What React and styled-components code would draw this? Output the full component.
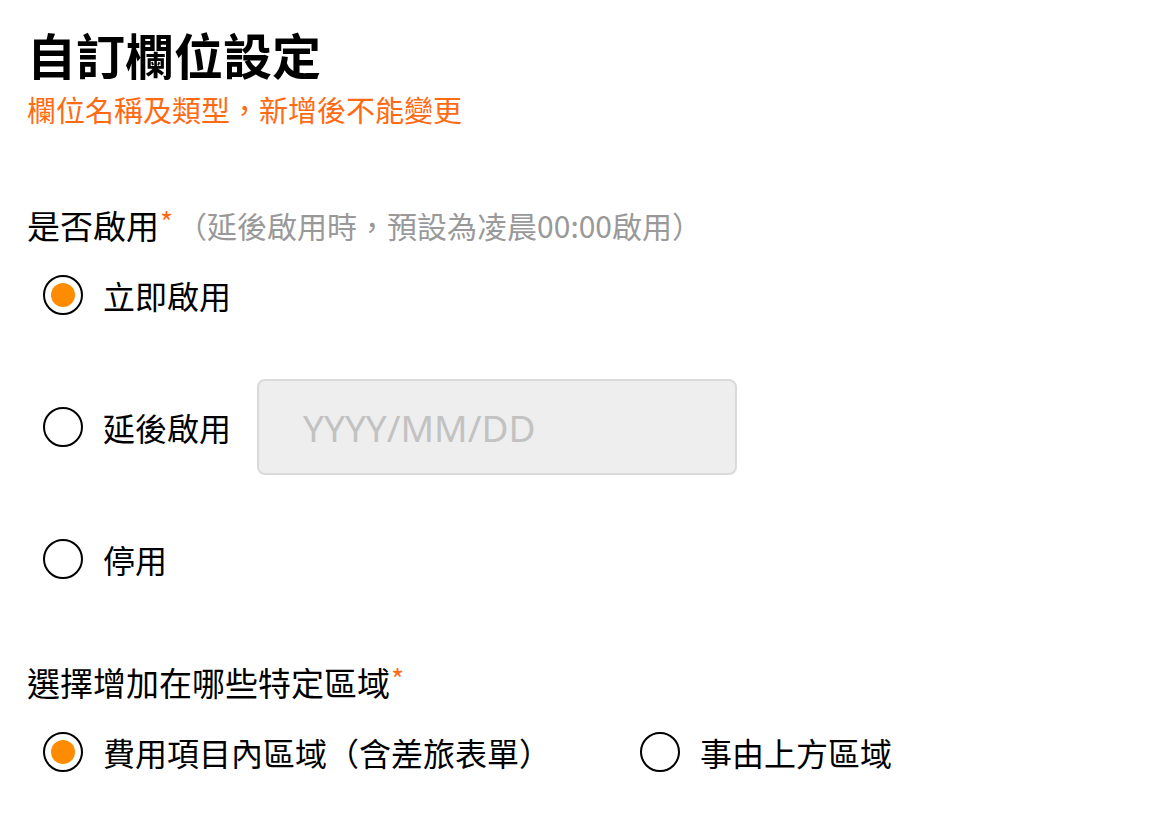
import React, { useState } from 'react';
import styled, { createGlobalStyle } from 'styled-components';

const GlobalStyle = createGlobalStyle`
  html, body {
    margin: 0;
    padding: 0;
    background: #ffffff;
  }
  body {
    font-family: "Noto Sans CJK TC", "Noto Sans", sans-serif;
    color: #000;
  }
`;

const Page = styled.div`
  padding: 22px 27px 20px;
`;

const Title = styled.h1`
  margin: 0;
  font-size: 49px;
  line-height: 64px;
  font-weight: 700;
  color: #000;
`;

const Subtitle = styled.p`
  margin: 3px 0 0;
  font-size: 29px;
  line-height: 40px;
  color: #ff6a13;
`;

const FieldLabel = styled.div`
  margin-top: ${(p) => p.$top}px;
  font-size: 33px;
  line-height: 44px;
  display: flex;
  align-items: flex-start;
`;

const Star = styled.span`
  color: #ff6a13;
  font-size: 28px;
  line-height: 36px;
  margin-left: 1px;
`;

const Hint = styled.span`
  color: #999;
  font-size: 30px;
  line-height: 44px;
  margin-left: 4px;
`;

const OptionList = styled.div`
  display: flex;
  flex-direction: ${(p) => (p.$row ? 'row' : 'column')};
  gap: ${(p) => (p.$row ? '89px' : '36px')};
  padding-left: 16px;
`;

const Option = styled.label`
  display: flex;
  align-items: center;
  min-height: 96px;
  cursor: pointer;
  font-size: 32px;
  line-height: 44px;
`;

const Radio = styled.span`
  box-sizing: border-box;
  width: 40px;
  height: 40px;
  border-radius: 50%;
  border: 2px solid #000;
  display: flex;
  align-items: center;
  justify-content: center;
  flex-shrink: 0;
  margin-right: 20px;
  &::after {
    content: '';
    width: 24px;
    height: 24px;
    border-radius: 50%;
    background: ${(p) => (p.$checked ? '#ff8c00' : 'transparent')};
  }
`;

const DateInput = styled.input`
  box-sizing: border-box;
  width: 480px;
  height: 96px;
  margin-left: 26px;
  padding: 0 0 0 44px;
  background: #eeeeee;
  border: 2px solid #dadada;
  border-radius: 8px;
  font-family: "Noto Sans", "Noto Sans CJK TC", sans-serif;
  font-size: 37px;
  color: #333;
  outline: none;
  &::placeholder {
    color: #c2c2c2;
  }
`;

const enableOptions = [
  { id: 'now', label: '立即啟用' },
  { id: 'later', label: '延後啟用' },
  { id: 'off', label: '停用' },
];

const areaOptions = [
  { id: 'expense', label: '費用項目內區域（含差旅表單）' },
  { id: 'reason', label: '事由上方區域' },
];

export default function App() {
  const [enable, setEnable] = useState('now');
  const [area, setArea] = useState('expense');

  return (
    <>
      <GlobalStyle />
      <Page>
        <Title>自訂欄位設定</Title>
        <Subtitle>欄位名稱及類型，新增後不能變更</Subtitle>

        <FieldLabel $top={74}>
          是否啟用<Star>*</Star>
          <Hint>（延後啟用時，預設為凌晨00:00啟用）</Hint>
        </FieldLabel>
        <OptionList>
          {enableOptions.map((o) => (
            <Option key={o.id} onClick={() => setEnable(o.id)}>
              <Radio $checked={enable === o.id} />
              {o.label}
              {o.id === 'later' && (
                <DateInput disabled placeholder="YYYY/MM/DD" onClick={(e) => e.stopPropagation()} />
              )}
            </Option>
          ))}
        </OptionList>

        <FieldLabel $top={53}>
          選擇增加在哪些特定區域<Star>*</Star>
        </FieldLabel>
        <OptionList $row>
          {areaOptions.map((o) => (
            <Option key={o.id} onClick={() => setArea(o.id)}>
              <Radio $checked={area === o.id} />
              {o.label}
            </Option>
          ))}
        </OptionList>
      </Page>
    </>
  );
}
